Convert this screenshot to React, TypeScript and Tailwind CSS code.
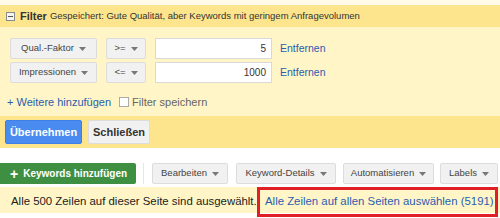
import React from "react";

const Caret = () => (
  <svg width="7" height="4" viewBox="0 0 7 4" className="ml-[5px] inline-block shrink-0">
    <path d="M0 0 L7 0 L3.5 4 Z" fill="#777" />
  </svg>
);

const GreyBtn = ({ label, w }: { label: string; w: string }) => (
  <div
    className={`${w} h-[21px] flex items-center justify-center bg-[#f1f1f1] border border-[#dcdcdc] rounded-[2px] text-[9.5px] text-[#444] whitespace-nowrap`}
  >
    {label}
    <Caret />
  </div>
);

export default function App() {
  return (
    <div
      className="w-[500px] h-[218px] bg-white overflow-hidden"
      style={{ fontFamily: '"Liberation Sans", Arial, sans-serif' }}
    >
      <div className="h-[5px] bg-[#fffbe8]" />
      {/* header */}
      <div className="h-[22px] bg-[#fde58d] flex items-center pl-[6px] whitespace-nowrap">
        <div className="w-[9px] h-[9px] border border-[#8a8a8a] bg-[#f4f4f4] flex items-center justify-center">
          <div className="w-[5px] h-[1px] bg-[#555]" />
        </div>
        <span className="ml-[5px] text-[11px] font-bold text-[#333]">Filter</span>
        <span className="ml-[3px] text-[9.5px] text-[#333] mt-[1px]">
          Gespeichert: Gute Qualität, aber Keywords mit geringem Anfragevolumen
        </span>
      </div>
      {/* body */}
      <div className="bg-[#fff5c6] h-[89px] pt-[11px] pl-[10px]">
        <div className="flex flex-col gap-[3px]">
          <div className="flex items-center">
            <GreyBtn label="Qual.-Faktor" w="w-[87px]" />
            <div className="ml-[9px]">
              <GreyBtn label=">=" w="w-[40px]" />
            </div>
            <div className="ml-[9px] w-[117px] h-[21px] bg-white border border-[#d9d9d9] flex items-center justify-end pr-[5px] text-[10px] text-[#333]">
              5
            </div>
            <span className="ml-[8px] text-[10.5px] text-[#2a5db0]">Entfernen</span>
          </div>
          <div className="flex items-center">
            <GreyBtn label="Impressionen" w="w-[87px]" />
            <div className="ml-[9px]">
              <GreyBtn label="<=" w="w-[40px]" />
            </div>
            <div className="ml-[9px] w-[117px] h-[21px] bg-white border border-[#d9d9d9] flex items-center justify-end pr-[5px] text-[10px] text-[#333]">
              1000
            </div>
            <span className="ml-[8px] text-[10.5px] text-[#2a5db0]">Entfernen</span>
          </div>
        </div>
        <div className="flex items-center mt-[11px] ml-[-3px] h-[16px] text-[11px] whitespace-nowrap">
          <span className="text-[#2a5db0]">+ Weitere hinzufügen</span>
          <div className="ml-[8px] w-[10px] h-[10px] border border-[#aaa] bg-white" />
          <span className="ml-[3px] text-[#666]">Filter speichern</span>
        </div>
      </div>
      {/* action band */}
      <div className="bg-[#fde58d] h-[32px] flex items-center pl-[5px] gap-[6px]">
        <div className="w-[77px] h-[24px] rounded-[2px] bg-[#4a8bf0] border border-[#3f7fe6] flex items-center justify-center text-[11px] font-bold text-white">
          Übernehmen
        </div>
        <div className="w-[62px] h-[24px] rounded-[2px] bg-[#f1f1f1] border border-[#dcdcdc] flex items-center justify-center text-[11px] font-bold text-[#333]">
          Schließen
        </div>
      </div>
      <div className="h-[15px]" />
      {/* toolbar */}
      <div className="flex items-center h-[21px]">
        <div className="w-[136px] h-[21px] bg-[#3f8f43] rounded-r-[2px] flex items-center pl-[10px] text-[10px] font-bold text-white whitespace-nowrap">
          <span className="text-[14px] leading-none mr-[5px] font-bold">+</span>
          Keywords hinzufügen
        </div>
        <div className="ml-[7px] w-px h-[21px] bg-[#e6e6e6]" />
        <div className="ml-[8px]">
          <GreyBtn label="Bearbeiten" w="w-[76px]" />
        </div>
        <div className="ml-[8px]">
          <GreyBtn label="Keyword-Details" w="w-[100px]" />
        </div>
        <div className="ml-[7px]">
          <GreyBtn label="Automatisieren" w="w-[91px]" />
        </div>
        <div className="ml-[6px]">
          <GreyBtn label="Labels" w="w-[58px]" />
        </div>
      </div>
      <div className="h-[3px]" />
      {/* selection bar */}
      <div className="h-[26px] bg-[#fff5c6] flex items-start">
        <span className="ml-[11px] mt-[6px] text-[11.4px] text-[#222] whitespace-nowrap">
          Alle 500 Zeilen auf dieser Seite sind ausgewählt.
        </span>
        <div className="ml-auto mr-[2px] h-[30px] w-[241px] border-[3px] border-[#e11f26] flex items-center pl-[5px] text-[11.4px] text-[#2a5db0] shrink-0 whitespace-nowrap">
          Alle Zeilen auf allen Seiten auswählen (5191)
        </div>
      </div>
    </div>
  );
}
